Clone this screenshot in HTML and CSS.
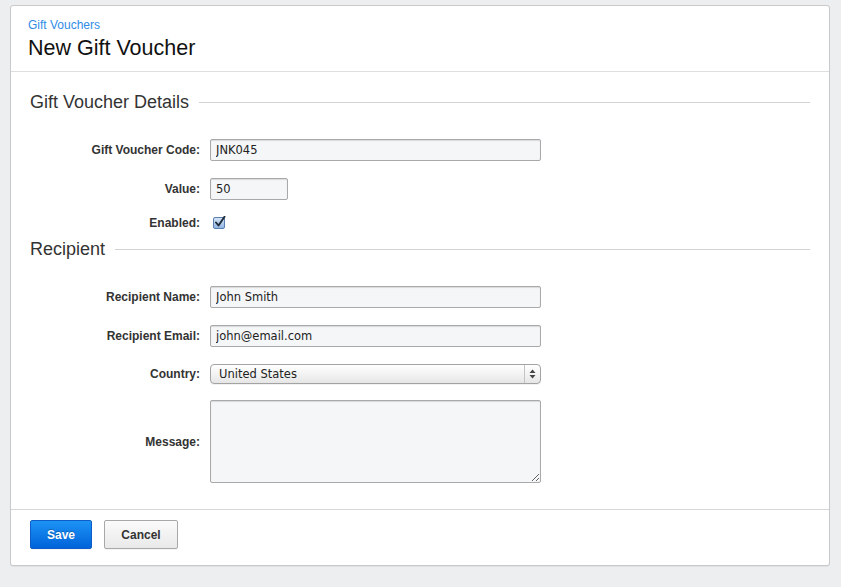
FILE: index.html
```html
<!DOCTYPE html>
<html>
<head>
<meta charset="utf-8">
<link rel="stylesheet" href="styles.css">
</head>
<body>
<div class="card">
  <div class="header">
    <a class="crumb" href="#">Gift Vouchers</a>
    <h1 class="title">New Gift Voucher</h1>
  </div>
  <div class="body">
    <h2 class="legend">Gift Voucher Details</h2>
    <div class="row first">
      <label class="lbl">Gift Voucher Code:</label>
      <input class="inp wide" type="text" value="JNK045">
    </div>
    <div class="row">
      <label class="lbl">Value:</label>
      <input class="inp short" type="text" value="50">
    </div>
    <div class="row check-row">
      <label class="lbl">Enabled:</label>
      <span class="check">
        <svg width="13" height="13" viewBox="0 0 13 13">
          <defs>
            <linearGradient id="cg" x1="0" y1="0" x2="0" y2="1">
              <stop offset="0" stop-color="#d7e6f7"/>
              <stop offset="1" stop-color="#8fb3e0"/>
            </linearGradient>
          </defs>
          <rect x="0.5" y="1.5" width="11" height="11" rx="1.5" fill="url(#cg)" stroke="#5a7fb0"/>
          <path d="M3 6.5 L5.5 9.5 L11.5 0.8" fill="none" stroke="#1f2a3a" stroke-width="1.9" stroke-linecap="round" stroke-linejoin="round"/>
        </svg>
      </span>
    </div>
    <h2 class="legend second">Recipient</h2>
    <div class="row first">
      <label class="lbl">Recipient Name:</label>
      <input class="inp wide" type="text" value="John Smith">
    </div>
    <div class="row">
      <label class="lbl">Recipient Email:</label>
      <input class="inp wide" type="text" value="john@email.com">
    </div>
    <div class="row">
      <label class="lbl">Country:</label>
      <div class="select">
        <span class="sel-text">United States</span>
        <span class="sel-arrows">
          <svg width="7" height="10" viewBox="0 0 7 10">
            <path d="M3.5 0.5 L6.5 4 L0.5 4 Z" fill="#444"/>
            <path d="M3.5 9.5 L6.5 6 L0.5 6 Z" fill="#444"/>
          </svg>
        </span>
      </div>
    </div>
    <div class="row msg-row">
      <label class="lbl">Message:</label>
      <textarea class="txt"></textarea>
    </div>
  </div>
  <div class="footer">
    <button class="btn primary">Save</button>
    <button class="btn">Cancel</button>
  </div>
</div>
</body>
</html>
```

FILE: styles.css
```css
html, body {
  margin: 0;
  padding: 0;
}
body {
  background: #edeef0;
  font-family: "Liberation Sans", Arial, sans-serif;
  color: #222;
  height: 587px;
  overflow: hidden;
}
.card {
  box-sizing: border-box;
  width: 820px;
  height: 561px;
  margin: 5px 0 0 10px;
  background: #fff;
  border: 1px solid #c9c9c9;
  border-radius: 3px;
  box-shadow: 0 1px 1px rgba(0,0,0,0.06);
}
.header {
  height: 66px;
  box-sizing: border-box;
  padding: 12px 17px 0;
  border-bottom: 1px solid #dedede;
}
.crumb {
  display: block;
  font-size: 12px;
  line-height: 14px;
  color: #2f8ce6;
  text-decoration: none;
}
.title {
  margin: 3px 0 0;
  font-size: 21.5px;
  line-height: 26px;
  font-weight: normal;
  color: #111;
}
.body {
  padding: 20px 19px 26px;
  border-bottom: 1px solid #d6d6d6;
}
.legend {
  display: flex;
  align-items: center;
  margin: 0;
  font-size: 18px;
  line-height: 20px;
  height: 20px;
  font-weight: normal;
  color: #333;
}
.legend::after {
  content: "";
  flex: 1;
  height: 1px;
  background: #d2d2d2;
  margin-left: 10px;
}
.legend.second {
  margin-top: 10px;
}
.row {
  display: flex;
  align-items: center;
  margin-top: 17px;
}
.row.first {
  margin-top: 27px;
}
.lbl {
  width: 170px;
  margin-right: 10px;
  text-align: right;
  font-size: 12px;
  font-weight: bold;
  color: #333;
}
.inp {
  box-sizing: border-box;
  height: 22px;
  margin: 0;
  padding: 0 5px;
  border: 1px solid #a9a9a9;
  border-radius: 2px;
  background: #f5f6f8;
  box-shadow: inset 0 1px 1px rgba(0,0,0,0.12);
  font-family: "DejaVu Sans", sans-serif;
  font-size: 11.5px;
  color: #222;
  outline: none;
}
.wide {
  width: 331px;
}
.short {
  width: 78px;
}
.check-row {
  margin-top: 16px;
  height: 13px;
}
.check {
  display: flex;
  width: 13px;
  height: 13px;
  margin-left: 3px;
  margin-top: -1px;
}
.select {
  box-sizing: border-box;
  width: 331px;
  height: 20px;
  display: flex;
  align-items: stretch;
  border: 1px solid #a3a3a3;
  border-radius: 4px;
  background: linear-gradient(#ffffff, #f3f3f3 50%, #e6e6e6);
  box-shadow: 0 1px 0 rgba(0,0,0,0.05);
}
.sel-text {
  flex: 1;
  display: flex;
  align-items: center;
  padding-left: 8px;
  font-family: "DejaVu Sans", sans-serif;
  font-size: 11.5px;
  color: #222;
}
.sel-arrows {
  width: 15px;
  display: flex;
  align-items: center;
  justify-content: center;
  border-left: 1px solid #c4c4c4;
}
.msg-row {
  margin-top: 16px;
}
.txt {
  box-sizing: border-box;
  width: 331px;
  height: 83px;
  margin: 0;
  padding: 4px;
  border: 1px solid #a9a9a9;
  border-radius: 2px;
  background: #f5f6f8;
  box-shadow: inset 0 1px 1px rgba(0,0,0,0.12);
  outline: none;
  font-family: "DejaVu Sans", sans-serif;
  font-size: 11.5px;
}
.footer {
  display: flex;
  gap: 12px;
  padding: 10px 19px 0;
}
.btn {
  box-sizing: border-box;
  height: 29px;
  width: 74px;
  margin: 0;
  padding: 0;
  border: 1px solid #a8a8a8;
  border-radius: 2px;
  background: linear-gradient(#fbfbfb, #e9e9e9);
  font-family: "Liberation Sans", Arial, sans-serif;
  font-size: 12px;
  font-weight: bold;
  color: #333;
  box-shadow: 0 1px 0 rgba(0,0,0,0.04);
}
.btn.primary {
  width: 62px;
  border-color: #0d5cc8;
  background: linear-gradient(#1d93f5, #0063da);
  color: #fff;
  text-shadow: 0 -1px 0 rgba(0,0,0,0.25);
}
```
